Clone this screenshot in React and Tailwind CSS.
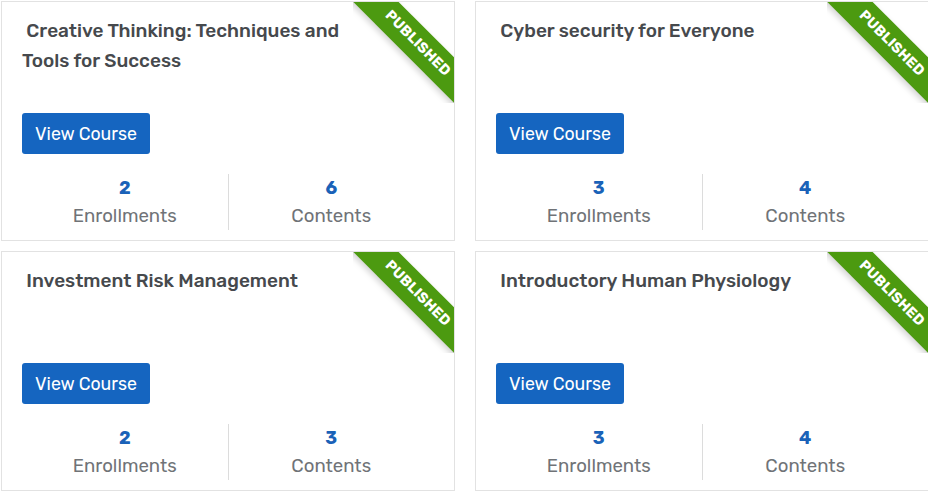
import React from "react";

const courses = [
  { title: "Creative Thinking: Techniques and Tools for Success", enroll: 2, contents: 6 },
  { title: "Cyber security for Everyone", enroll: 3, contents: 4 },
  { title: "Investment Risk Management", enroll: 2, contents: 3 },
  { title: "Introductory Human Physiology", enroll: 3, contents: 4 },
];

function Ribbon() {
  return (
    <div className="absolute top-0 right-0 w-[101px] h-[101px] overflow-hidden pointer-events-none">
      <div className="absolute left-[-19px] top-[22px] w-[160px] h-[32px] rotate-45 bg-[#4c9a10] shadow-[0_3px_6px_rgba(0,0,0,0.18)] flex items-center justify-center">
        <span className="text-white text-[14.5px] font-bold tracking-[0.2px] uppercase pl-[10px]">Published</span>
      </div>
    </div>
  );
}

function Card({ c }) {
  return (
    <div className="relative border border-[#e2e2e2] bg-white h-[240px] pl-[20px] pr-[20px] pt-[14px]">
      <Ribbon />
      <div className="h-[60px] pr-[90px] text-[19px] leading-[30px] font-medium text-[#46494d]">
        {"\u00a0" + c.title}
      </div>
      <button className="mt-[37px] w-[128px] h-[41px] rounded-[3px] bg-[#1565c0] text-white text-[17.7px] leading-none">
        View Course
      </button>
      <div className="mt-[20px] flex">
        <div className="flex-1 flex flex-col items-center border-r border-[#dcdcdc] pt-[2px]">
          <div className="text-[18px] leading-[24px] font-bold text-[#1a62b8]">{c.enroll}</div>
          <div className="mt-[2px] text-[18.6px] leading-[28px] font-normal text-[#707377]">Enrollments</div>
        </div>
        <div className="flex-1 flex flex-col items-center pt-[2px]">
          <div className="text-[18px] leading-[24px] font-bold text-[#1a62b8]">{c.contents}</div>
          <div className="mt-[2px] text-[18.6px] leading-[28px] font-normal text-[#707377]">Contents</div>
        </div>
      </div>
    </div>
  );
}

export default function App() {
  return (
    <div className="w-[928px] h-[493px] overflow-hidden bg-white" style={{ fontFamily: "Rubik, Inter, 'Noto Sans', sans-serif" }}>
      <div className="grid grid-cols-[454px_454px] gap-x-[20px] gap-y-[10px] pl-[1px] pt-[1px]">
        {courses.map((c, i) => (
          <Card key={i} c={c} />
        ))}
      </div>
    </div>
  );
}
